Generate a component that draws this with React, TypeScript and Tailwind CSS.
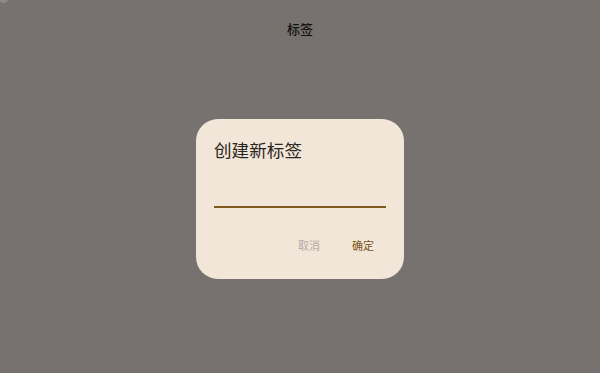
import React from "react";

export default function App() {
  return (
    <div
      className="relative w-[600px] h-[373px] overflow-hidden bg-[#fbf8f4]"
      style={{ fontFamily: '"Noto Sans CJK SC", "Noto Sans", sans-serif' }}
    >
      <div className="h-[58px] flex items-center justify-center">
        <span className="text-[13px] font-medium text-[#1d1b18]">标签</span>
      </div>
      <div className="absolute inset-0 bg-[#77726f]">
        <span className="absolute left-[-1px] top-[-6px] w-[9px] h-[9px] rounded-full bg-[#8a8a90]" />
        <div className="h-[58px] flex items-center justify-center">
          <span className="text-[13px] font-medium text-[#141210]">标签</span>
        </div>
      </div>
      <div className="absolute inset-0 flex items-center justify-center pt-[25px]">
        <div className="w-[208px] h-[160px] rounded-[22px] bg-[#f2e6d9] px-[18px] pt-[19px] flex flex-col">
          <div className="h-[24px] leading-[24px] text-[17.6px] text-[#2b2622]">创建新标签</div>
          <div className="h-[46px] border-b-2 border-[#7d5a22]" />
          <div className="mt-[29px] flex justify-end gap-[8px]">
            <button className="px-[12px] h-[16px] leading-[16px] text-[11px] text-[#b3aba3]">取消</button>
            <button className="px-[12px] h-[16px] leading-[16px] text-[11px] text-[#7a5621]">确定</button>
          </div>
        </div>
      </div>
    </div>
  );
}
